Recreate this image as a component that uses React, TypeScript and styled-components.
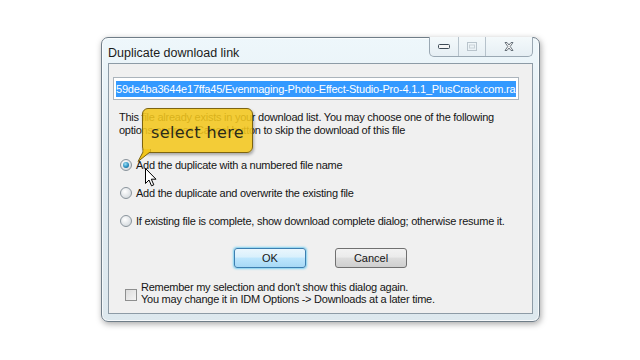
import React from 'react'
import styled, { createGlobalStyle } from 'styled-components'

const GlobalStyle = createGlobalStyle`
  html, body {
    margin: 0;
    padding: 0;
    background: #ffffff;
  }
  body {
    font-family: "Liberation Sans", Arial, sans-serif;
  }
`

const Page = styled.div`
  width: 640px;
  height: 360px;
  box-sizing: border-box;
  padding: 37px 0 0 101px;
  overflow: hidden;
  position: relative;
`

const Frame = styled.div`
  width: 439px;
  height: 285px;
  box-sizing: border-box;
  border: 1px solid #6f7d88;
  border-radius: 7px;
  background: linear-gradient(180deg, #eef7fb 0%, #e2edf3 40%, #dde8ee 100%);
  box-shadow: 1px 2px 6px rgba(0, 0, 0, 0.35), inset 0 0 0 1px rgba(255, 255, 255, 0.7);
  display: flex;
  flex-direction: column;
`

const TitleBar = styled.div`
  height: 25px;
  display: flex;
  align-items: flex-start;
  justify-content: space-between;
  padding: 0 6px 0 6px;
`

const Title = styled.div`
  font-family: "Liberation Sans", Arial, sans-serif;
  font-size: 12.5px;
  color: #1b1b1b;
  padding-top: 8px;
`

const Controls = styled.div`
  display: flex;
  margin-top: -1px;
  height: 19px;
  border: 1px solid #9aa8b3;
  border-top: none;
  border-radius: 0 0 5px 5px;
  background: linear-gradient(180deg, #f4f9fb 0%, #e6eff4 100%);
  overflow: hidden;
`

const CtrlButton = styled.div<{ w: number; last?: boolean }>`
  width: ${({ w }) => w}px;
  display: flex;
  align-items: center;
  justify-content: center;
  border-right: ${({ last }) => (last ? 'none' : '1px solid #b6c2cb')};
`

const Client = styled.div`
  flex: 1;
  margin: 0 6px 7px 6px;
  border: 1px solid #8d9ba6;
  background: #f0f0f0;
  padding: 13px 0 0 4px;
  display: flex;
  flex-direction: column;
`

const UrlBox = styled.div`
  width: 406px;
  height: 23px;
  box-sizing: border-box;
  border: 1px solid #abb4bc;
  background: #ffffff;
  padding: 2px 2px;
  display: flex;
  align-items: center;
`

const Selected = styled.span`
  display: block;
  width: 100%;
  height: 16px;
  line-height: 16px;
  background: #3399ff;
  color: #ffffff;
  font-size: 11px;
  letter-spacing: -0.2px;
  white-space: nowrap;
  overflow: hidden;
`

const Message = styled.p`
  margin: 11px 0 0 6px;
  font-size: 11px;
  line-height: 13px;
  color: #151515;
  letter-spacing: -0.25px;
  width: 400px;
`

const Options = styled.div`
  display: flex;
  flex-direction: column;
  gap: 15px;
  margin: 21px 0 0 7px;
`

const OptionRow = styled.label`
  display: flex;
  align-items: center;
  gap: 4px;
  font-size: 11px;
  color: #151515;
  letter-spacing: -0.25px;
  height: 13px;
`

const Radio = styled.span<{ checked?: boolean }>`
  width: 12px;
  height: 12px;
  border-radius: 50%;
  box-sizing: border-box;
  border: 1px solid #8a949c;
  background: radial-gradient(circle at 40% 35%, #ffffff 0%, #dfe3e6 60%, #c7cdd2 100%);
  display: flex;
  align-items: center;
  justify-content: center;

  &::after {
    content: '';
    display: ${({ checked }) => (checked ? 'block' : 'none')};
    width: 6px;
    height: 6px;
    border-radius: 50%;
    background: radial-gradient(circle at 40% 35%, #9ee0f5 0%, #2a8fc0 55%, #14567c 100%);
  }
`

const ButtonRow = styled.div`
  display: flex;
  gap: 29px;
  margin: 21px 0 0 121px;
`

const DlgButton = styled.div<{ primary?: boolean }>`
  width: 72px;
  height: 20px;
  box-sizing: border-box;
  border: 1px solid ${({ primary }) => (primary ? '#3c7fb1' : '#707070')};
  border-radius: 3px;
  background: ${({ primary }) =>
    primary
      ? 'linear-gradient(180deg, #eaf6fd 0%, #d9f0fc 45%, #bee6fd 50%, #a7d9f5 100%)'
      : 'linear-gradient(180deg, #f2f2f2 0%, #ebebeb 45%, #dddddd 50%, #cfcfcf 100%)'};
  box-shadow: ${({ primary }) => (primary ? '0 0 2px 1px #7fd0f0' : 'none')};
  display: flex;
  align-items: center;
  justify-content: center;
  font-size: 11px;
  color: #151515;
`

const RememberRow = styled.div`
  display: flex;
  align-items: center;
  gap: 4px;
  margin: 13px 0 0 12px;
`

const CheckBox = styled.span`
  width: 12px;
  height: 12px;
  box-sizing: border-box;
  border: 1px solid #8e8f8f;
  background: linear-gradient(135deg, #dcdcdc 0%, #f4f4f4 100%);
  margin-top: 4px;
`

const RememberText = styled.div`
  font-size: 11px;
  line-height: 12px;
  color: #151515;
  letter-spacing: -0.25px;
`

const Bubble = styled.div`
  position: absolute;
  left: 142px;
  top: 108px;
  width: 111px;
  height: 45px;
  box-sizing: border-box;
  border: 1px solid #7d6410;
  border-radius: 6px;
  background: rgba(242, 198, 28, 0.88);
  box-shadow: 1px 2px 3px rgba(0, 0, 0, 0.3);
  display: flex;
  align-items: flex-end;
  justify-content: center;
  padding-bottom: 10px;
  font-family: "DejaVu Sans", "Liberation Sans", sans-serif;
  font-size: 16px;
  line-height: 18px;
  color: #2a2a1a;
  letter-spacing: 0.4px;
`

const Tail = styled.svg`
  position: absolute;
  left: -6px;
  bottom: -11px;
`

const Cursor = styled.svg`
  position: absolute;
  left: 145px;
  top: 168px;
`

const MinIcon = () => (
  <svg width="12" height="6" viewBox="0 0 12 6">
    <rect x="0.5" y="0.5" width="11" height="4" rx="1" fill="#f5f5f5" stroke="#3d4a55" />
  </svg>
)

const MaxIcon = () => (
  <svg width="10" height="9" viewBox="0 0 10 9">
    <rect x="0.5" y="0.5" width="9" height="8" fill="none" stroke="#b9c4cc" />
    <rect x="2.5" y="3" width="5" height="3" fill="none" stroke="#c9d2d8" />
  </svg>
)

const CloseIcon = () => (
  <svg width="10" height="9" viewBox="0 0 10 9">
    <path
      d="M1 0.5 L3 0.5 L5 3 L7 0.5 L9 0.5 L6.2 4.5 L9 8.5 L7 8.5 L5 6 L3 8.5 L1 8.5 L3.8 4.5 Z"
      fill="#f6f6f6"
      stroke="#4a5560"
      strokeWidth="0.8"
      strokeLinejoin="round"
    />
  </svg>
)

const App = () => (
  <>
    <GlobalStyle />
    <Page>
      <Frame>
        <TitleBar>
          <Title>Duplicate download link</Title>
          <Controls>
            <CtrlButton w={28}>
              <MinIcon />
            </CtrlButton>
            <CtrlButton w={26}>
              <MaxIcon />
            </CtrlButton>
            <CtrlButton w={46} last>
              <CloseIcon />
            </CtrlButton>
          </Controls>
        </TitleBar>
        <Client>
          <UrlBox>
            <Selected>59de4ba3644e17ffa45/Evenmaging-Photo-Effect-Studio-Pro-4.1.1_PlusCrack.com.rar</Selected>
          </UrlBox>
          <Message>
            This file already exists in your download list. You may choose one of the following
            options or press Cancel button to skip the download of this file
          </Message>
          <Options>
            <OptionRow>
              <Radio checked />
              Add the duplicate with a numbered file name
            </OptionRow>
            <OptionRow>
              <Radio />
              Add the duplicate and overwrite the existing file
            </OptionRow>
            <OptionRow>
              <Radio />
              If existing file is complete, show download complete dialog; otherwise resume it.
            </OptionRow>
          </Options>
          <ButtonRow>
            <DlgButton primary>OK</DlgButton>
            <DlgButton>Cancel</DlgButton>
          </ButtonRow>
          <RememberRow>
            <CheckBox />
            <RememberText>
              Remember my selection and don&apos;t show this dialog again.
              <br />
              You may change it in IDM Options -&gt; Downloads at a later time.
            </RememberText>
          </RememberRow>
        </Client>
      </Frame>
      <Bubble>
        select here
        <Tail width="14" height="14" viewBox="0 0 14 14">
          <path d="M6 0 L6 3 L1 12.5 L13 3 L13 0 Z" fill="#f2c61c" stroke="#7d6410" strokeWidth="1" strokeLinejoin="round" />
          <rect x="6.5" y="0" width="7" height="3" fill="#f2c61c" />
        </Tail>
      </Bubble>
      <Cursor width="12" height="19" viewBox="0 0 12 19">
        <path d="M0.5 0.5 L0.5 15.5 L4 12 L6.5 17.8 L8.8 16.8 L6.3 11.2 L11 11.2 Z" fill="#ffffff" stroke="#000000" strokeWidth="1" strokeLinejoin="round" />
      </Cursor>
    </Page>
  </>
)

export default App
